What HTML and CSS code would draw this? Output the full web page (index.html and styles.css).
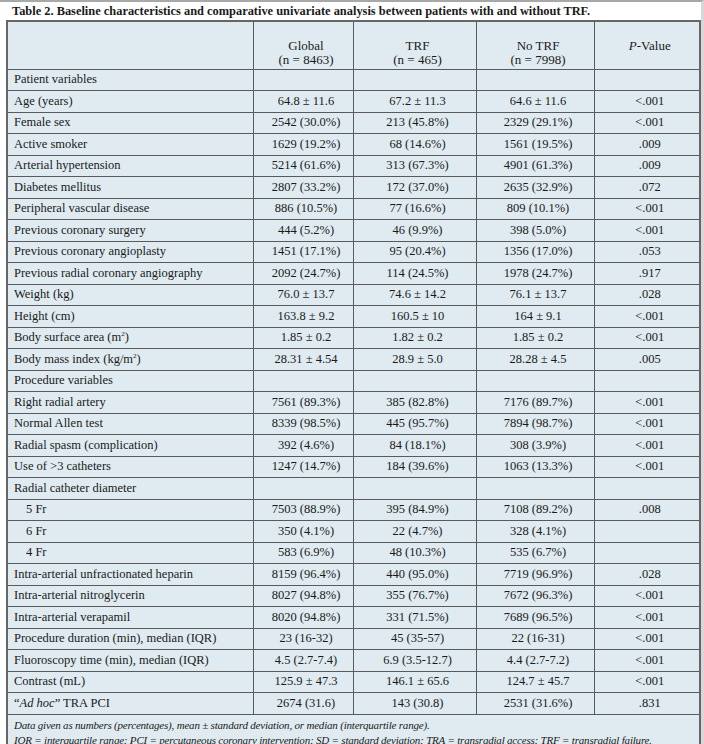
FILE: index.html
```html
<!DOCTYPE html>
<html>
<head>
<meta charset="utf-8">
<link rel="stylesheet" href="styles.css">
</head>
<body>
<div class="frame">
  <div class="title">Table 2. Baseline characteristics and comparative univariate analysis between patients with and without TRF.</div>
  <table class="tbl">
    <colgroup>
      <col class="c1"><col class="c2"><col class="c3"><col class="c4"><col class="c5">
    </colgroup>
    <thead>
      <tr class="head">
        <th></th>
        <th>Global<br>(n = 8463)</th>
        <th>TRF<br>(n = 465)</th>
        <th>No TRF<br>(n = 7998)</th>
        <th><i>P</i>-Value</th>
      </tr>
    </thead>
    <tbody>
      <tr class="sec"><td>Patient variables</td><td></td><td></td><td></td><td></td></tr>
      <tr><td>Age (years)</td><td>64.8 ± 11.6</td><td>67.2 ± 11.3</td><td>64.6 ± 11.6</td><td>&lt;.001</td></tr>
      <tr><td>Female sex</td><td>2542 (30.0%)</td><td>213 (45.8%)</td><td>2329 (29.1%)</td><td>&lt;.001</td></tr>
      <tr><td>Active smoker</td><td>1629 (19.2%)</td><td>68 (14.6%)</td><td>1561 (19.5%)</td><td>.009</td></tr>
      <tr><td>Arterial hypertension</td><td>5214 (61.6%)</td><td>313 (67.3%)</td><td>4901 (61.3%)</td><td>.009</td></tr>
      <tr><td>Diabetes mellitus</td><td>2807 (33.2%)</td><td>172 (37.0%)</td><td>2635 (32.9%)</td><td>.072</td></tr>
      <tr><td>Peripheral vascular disease</td><td>886 (10.5%)</td><td>77 (16.6%)</td><td>809 (10.1%)</td><td>&lt;.001</td></tr>
      <tr><td>Previous coronary surgery</td><td>444 (5.2%)</td><td>46 (9.9%)</td><td>398 (5.0%)</td><td>&lt;.001</td></tr>
      <tr><td>Previous coronary angioplasty</td><td>1451 (17.1%)</td><td>95 (20.4%)</td><td>1356 (17.0%)</td><td>.053</td></tr>
      <tr><td>Previous radial coronary angiography</td><td>2092 (24.7%)</td><td>114 (24.5%)</td><td>1978 (24.7%)</td><td>.917</td></tr>
      <tr><td>Weight (kg)</td><td>76.0 ± 13.7</td><td>74.6 ± 14.2</td><td>76.1 ± 13.7</td><td>.028</td></tr>
      <tr><td>Height (cm)</td><td>163.8 ± 9.2</td><td>160.5 ± 10</td><td>164 ± 9.1</td><td>&lt;.001</td></tr>
      <tr><td>Body surface area (m<sup>2</sup>)</td><td>1.85 ± 0.2</td><td>1.82 ± 0.2</td><td>1.85 ± 0.2</td><td>&lt;.001</td></tr>
      <tr><td>Body mass index (kg/m<sup>2</sup>)</td><td>28.31 ± 4.54</td><td>28.9 ± 5.0</td><td>28.28 ± 4.5</td><td>.005</td></tr>
      <tr class="sec"><td>Procedure variables</td><td></td><td></td><td></td><td></td></tr>
      <tr><td>Right radial artery</td><td>7561 (89.3%)</td><td>385 (82.8%)</td><td>7176 (89.7%)</td><td>&lt;.001</td></tr>
      <tr><td>Normal Allen test</td><td>8339 (98.5%)</td><td>445 (95.7%)</td><td>7894 (98.7%)</td><td>&lt;.001</td></tr>
      <tr><td>Radial spasm (complication)</td><td>392 (4.6%)</td><td>84 (18.1%)</td><td>308 (3.9%)</td><td>&lt;.001</td></tr>
      <tr><td>Use of &gt;3 catheters</td><td>1247 (14.7%)</td><td>184 (39.6%)</td><td>1063 (13.3%)</td><td>&lt;.001</td></tr>
      <tr><td>Radial catheter diameter</td><td></td><td></td><td></td><td></td></tr>
      <tr><td class="ind">5 Fr</td><td>7503 (88.9%)</td><td>395 (84.9%)</td><td>7108 (89.2%)</td><td>.008</td></tr>
      <tr><td class="ind">6 Fr</td><td>350 (4.1%)</td><td>22 (4.7%)</td><td>328 (4.1%)</td><td></td></tr>
      <tr><td class="ind">4 Fr</td><td>583 (6.9%)</td><td>48 (10.3%)</td><td>535 (6.7%)</td><td></td></tr>
      <tr><td>Intra-arterial unfractionated heparin</td><td>8159 (96.4%)</td><td>440 (95.0%)</td><td>7719 (96.9%)</td><td>.028</td></tr>
      <tr><td>Intra-arterial nitroglycerin</td><td>8027 (94.8%)</td><td>355 (76.7%)</td><td>7672 (96.3%)</td><td>&lt;.001</td></tr>
      <tr><td>Intra-arterial verapamil</td><td>8020 (94.8%)</td><td>331 (71.5%)</td><td>7689 (96.5%)</td><td>&lt;.001</td></tr>
      <tr><td>Procedure duration (min), median (IQR)</td><td>23 (16-32)</td><td>45 (35-57)</td><td>22 (16-31)</td><td>&lt;.001</td></tr>
      <tr><td>Fluoroscopy time (min), median (IQR)</td><td>4.5 (2.7-7.4)</td><td>6.9 (3.5-12.7)</td><td>4.4 (2.7-7.2)</td><td>&lt;.001</td></tr>
      <tr><td>Contrast (mL)</td><td>125.9 ± 47.3</td><td>146.1 ± 65.6</td><td>124.7 ± 45.7</td><td>&lt;.001</td></tr>
      <tr><td>“<i>Ad hoc</i>” TRA PCI</td><td>2674 (31.6)</td><td>143 (30.8)</td><td>2531 (31.6%)</td><td>.831</td></tr>
      <tr class="foot"><td colspan="5">Data given as numbers (percentages), mean ± standard deviation, or median (interquartile range).<br>IQR = interquartile range; PCI = percutaneous coronary intervention; SD = standard deviation; TRA = transradial access; TRF = transradial failure.</td></tr>
    </tbody>
  </table>
</div>
</body>
</html>
```

FILE: styles.css
```css
html, body {
  margin: 0;
  padding: 0;
  background: #ffffff;
}
body {
  font-family: "Liberation Serif", "DejaVu Serif", serif;
  color: #1a1a1a;
}
.frame {
  border-top: 2px solid #a8a8a8;
  border-right: 3px solid #d8d8d8;
  padding: 0 0 0 6px;
  box-sizing: border-box;
  width: 704px;
}
.title {
  font-weight: bold;
  font-size: 12.4px;
  line-height: 16px;
  padding: 1px 0 0 6px;
  height: 17px;
  white-space: nowrap;
}
.tbl {
  border-collapse: collapse;
  width: 693px;
  table-layout: fixed;
  background: #dfebf0;
  font-size: 12.5px;
  border: 2px solid #666;
  border-bottom: none;
}
.c1 { width: 246px; }
.c2 { width: 100px; }
.c3 { width: 123px; }
.c4 { width: 118px; }
.c5 { width: 106px; }
.tbl th, .tbl td {
  border: 1px solid #5a5a5a;
  padding: 0 0 0 6px;
  height: 20.5px;
  line-height: 15px;
  text-align: center;
  white-space: nowrap;
  font-weight: normal;
}
.tbl td:first-child {
  text-align: left;
}
.tbl .head th {
  height: 48px;
  vertical-align: top;
  padding-top: 17px;
  padding-bottom: 0;
  line-height: 14px;
  font-size: 13px;
  box-sizing: border-box;
}
.tbl td.ind {
  padding-left: 18px;
}
.tbl sup {
  font-size: 7px;
  line-height: 0;
  vertical-align: 5px;
}
.tbl .foot td {
  text-align: left;
  font-style: italic;
  font-size: 11px;
  letter-spacing: -0.2px;
  line-height: 15px;
  padding-top: 3px;
  height: auto;
  border-bottom: none;
}
```
